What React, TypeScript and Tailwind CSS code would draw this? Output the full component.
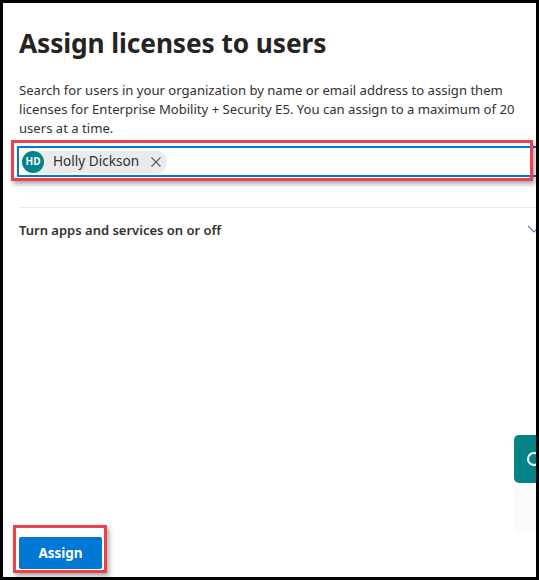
import React from "react";

export default function App() {
  const font = { fontFamily: '"Segoe UI", "Noto Sans", "Open Sans", Arial, sans-serif' };
  return (
    <div className="w-[539px] h-[580px] bg-black p-[3px]" style={font}>
      <div className="relative w-[533px] h-[574px] bg-white overflow-hidden">
        <div className="flex flex-col h-full pl-[16px]">
          <h1 className="mt-[22px] text-[26.3px] leading-[36px] font-bold text-[#252423] tracking-[-0.1px]">
            Assign licenses to users
          </h1>
          <p className="mt-[20px] text-[13.1px] leading-[19px] text-[#323130] pr-[12px]">
            Search for users in your organization by name or email address to assign them licenses for Enterprise Mobility + Security E5. You can assign to a maximum of 20 users at a time.
          </p>
          <div className="mt-[8px] -ml-[2px] w-[540px] h-[31px] border-2 border-[#0078d4] flex items-center pl-[3px]">
            <div className="flex items-center h-[22px] rounded-full bg-[#ebebeb] pr-[5px]">
              <div className="w-[22px] h-[22px] rounded-full bg-[#038387] flex items-center justify-center text-white text-[10px] font-bold">
                HD
              </div>
              <span className="ml-[9px] text-[13.6px] text-[#323130]">Holly Dickson</span>
              <svg className="ml-[11px]" width="12" height="12" viewBox="0 0 12 12">
                <path d="M1.5 1.5 L10.5 10.5 M10.5 1.5 L1.5 10.5" stroke="#605e5c" strokeWidth="1.1" fill="none" />
              </svg>
            </div>
          </div>
          <div className="mt-[30px] h-px bg-[#edebe9] w-[520px]" />
          <div className="mt-[12px] flex items-center">
            <span className="text-[13px] leading-[20px] font-semibold text-[#323130]">
              Turn apps and services on or off
            </span>
          </div>
          <div className="flex-1" />
          <div className="mb-[8px]">
            <button className="w-[83px] h-[32px] rounded-[2px] bg-[#0078d4] text-white text-[13.5px] font-bold">
              Assign
            </button>
          </div>
        </div>

        {/* chevron at right, clipped */}
        <svg className="absolute left-[524px] top-[221px]" width="14" height="10" viewBox="0 0 14 10">
          <path d="M1 2 L7 8 L13 2" stroke="#5c7fc4" strokeWidth="1.2" fill="none" />
        </svg>

        {/* teal floating button, clipped */}
        <div className="absolute left-[511px] top-[432px] w-[40px] h-[48px] rounded-[5px] bg-[#038387]">
          <svg className="absolute left-[12px] top-[16px]" width="16" height="16" viewBox="0 0 16 16">
            <circle cx="8" cy="8" r="6" stroke="white" strokeWidth="2" fill="none" />
          </svg>
        </div>
        <div className="absolute left-[511px] top-[480px] w-[30px] h-[50px] bg-[#fbfbfb]" />

        {/* annotation red boxes */}
        <div className="absolute left-[8px] top-[137px] w-[522px] h-[41px] border-[3px] border-[#ef414b] shadow-[2px_3px_5px_rgba(0,0,0,0.35)] pointer-events-none" />
        <div className="absolute left-[10px] top-[522px] w-[94px] h-[48px] border-[3px] border-[#ef414b] shadow-[2px_3px_5px_rgba(0,0,0,0.35)] pointer-events-none" />
      </div>
    </div>
  );
}
